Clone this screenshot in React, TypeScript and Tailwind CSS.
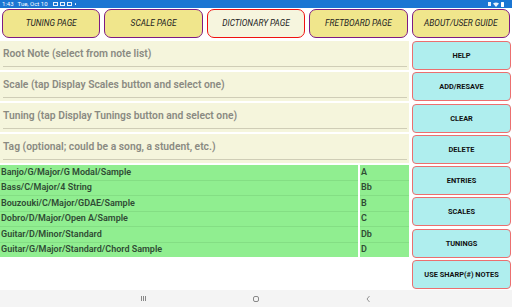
import React from "react";

const tabs = [
  { label: "TUNING PAGE", active: false },
  { label: "SCALE PAGE", active: false },
  { label: "DICTIONARY PAGE", active: true },
  { label: "FRETBOARD PAGE", active: false },
  { label: "ABOUT/USER GUIDE", active: false },
];

const inputs = [
  "Root Note (select from note list)",
  "Scale (tap Display Scales button and select one)",
  "Tuning (tap Display Tunings button and select one)",
  "Tag (optional; could be a song, a student, etc.)",
];

const entries = [
  "Banjo/G/Major/G Modal/Sample",
  "Bass/C/Major/4 String",
  "Bouzouki/C/Major/GDAE/Sample",
  "Dobro/D/Major/Open A/Sample",
  "Guitar/D/Minor/Standard",
  "Guitar/G/Major/Standard/Chord Sample",
];

const notes = ["A", "Bb", "B", "C", "Db", "D"];

const actions = [
  "HELP",
  "ADD/RESAVE",
  "CLEAR",
  "DELETE",
  "ENTRIES",
  "SCALES",
  "TUNINGS",
  "USE SHARP(#) NOTES",
];

export default function App() {
  return (
    <div
      className="w-[512px] h-[307px] bg-white flex flex-col overflow-hidden"
      style={{ fontFamily: "Roboto, 'Liberation Sans', sans-serif" }}
    >
      {/* status bar */}
      <div className="h-[8px] bg-[#1b76d3] flex items-center px-[2px] text-white text-[6px] leading-none">
        <span>1:43</span>
        <span className="ml-[4px]">Tue, Oct 10</span>
        <div className="ml-[5px] flex items-center gap-[2px]">
          <div className="w-[5px] h-[4px] border border-white/90" />
          <div className="w-[5px] h-[4px] border border-white/90" />
          <div className="w-[5px] h-[4px] border border-white/90" />
          <div className="w-[1.5px] h-[1.5px] rounded-full bg-white ml-[1px]" />
        </div>
        <div className="ml-auto mr-[6px] flex items-center gap-[2px]">
          <div className="w-[3px] h-[4px] bg-white/90" />
          <svg width="6" height="5" viewBox="0 0 6 5">
            <path d="M0 1.5 Q3 -0.5 6 1.5 L3 5 Z" fill="white" opacity="0.9" />
          </svg>
          <div className="w-[3px] h-[5px] bg-white rounded-[0.5px]" />
        </div>
      </div>

      {/* tabs */}
      <div className="flex gap-[4px] px-[2px] pt-[1px] h-[30px]">
        {tabs.map((t) => (
          <div
            key={t.label}
            className={`flex-1 h-[29px] rounded-[7px] flex items-center justify-center italic text-[8.3px] text-[#222] border-[1.5px] ${
              t.active
                ? "bg-[#f6f5de] border-[#f01010]"
                : "bg-[#f0e68c] border-[#7e1a84]"
            }`}
          >
            {t.label}
          </div>
        ))}
      </div>

      {/* main */}
      <div className="flex pt-[3px] flex-1">
        <div className="w-[409px] flex flex-col gap-[2px]">
          {inputs.map((s) => (
            <div key={s} className="h-[29px] bg-[#f5f5dc] pl-[3px] pr-0 flex flex-col">
              <div className="flex-1 flex items-center text-[10.3px] font-semibold text-[#8a8a82] pt-[1px]">
                {s}
              </div>
              <div className="h-[1px] bg-[#cfcdb6] mb-[3px] mr-[2px]" />
            </div>
          ))}
          <div className="flex gap-[2px] mt-[0px] h-[92px]">
            <div className="w-[358px] bg-[#90ee90] flex flex-col">
              {entries.map((e, i) => (
                <div
                  key={e}
                  className={`flex-1 flex items-center pl-[1px] text-[9px] font-semibold text-[#2f4b34] ${
                    i < entries.length - 1 ? "border-b border-[#84de84]" : ""
                  }`}
                >
                  {e}
                </div>
              ))}
            </div>
            <div className="flex-1 bg-[#90ee90] flex flex-col">
              {notes.map((n, i) => (
                <div
                  key={n}
                  className={`flex-1 flex items-center pl-[1px] text-[9px] font-semibold text-[#2f4b34] ${
                    i < notes.length - 1 ? "border-b border-[#84de84]" : ""
                  }`}
                >
                  {n}
                </div>
              ))}
            </div>
          </div>
        </div>
        <div className="w-[99px] ml-[3px] flex flex-col gap-[2.3px]">
          {actions.map((a) => (
            <div
              key={a}
              className="h-[29px] rounded-[4px] bg-[#afeeee] border border-[#ec6f6f] flex items-center justify-center text-[7.4px] font-bold text-[#111]"
            >
              {a}
            </div>
          ))}
        </div>
      </div>

      {/* nav bar */}
      <div className="h-[17px] bg-[#f4f4f4] flex items-center justify-center relative">
        <div className="absolute left-[141px] top-[6px] flex gap-[1.2px]">
          <div className="w-[0.8px] h-[5px] bg-[#888]" />
          <div className="w-[0.8px] h-[5px] bg-[#888]" />
          <div className="w-[0.8px] h-[5px] bg-[#888]" />
        </div>
        <div className="absolute left-[253px] top-[6px] w-[6px] h-[6px] border border-[#888] rounded-[2px]" />
        <svg className="absolute left-[366px] top-[5px]" width="5" height="8" viewBox="0 0 5 8">
          <path d="M3.5 1 L1 4 L3.5 7" stroke="#888" strokeWidth="0.9" fill="none" />
        </svg>
      </div>
    </div>
  );
}
